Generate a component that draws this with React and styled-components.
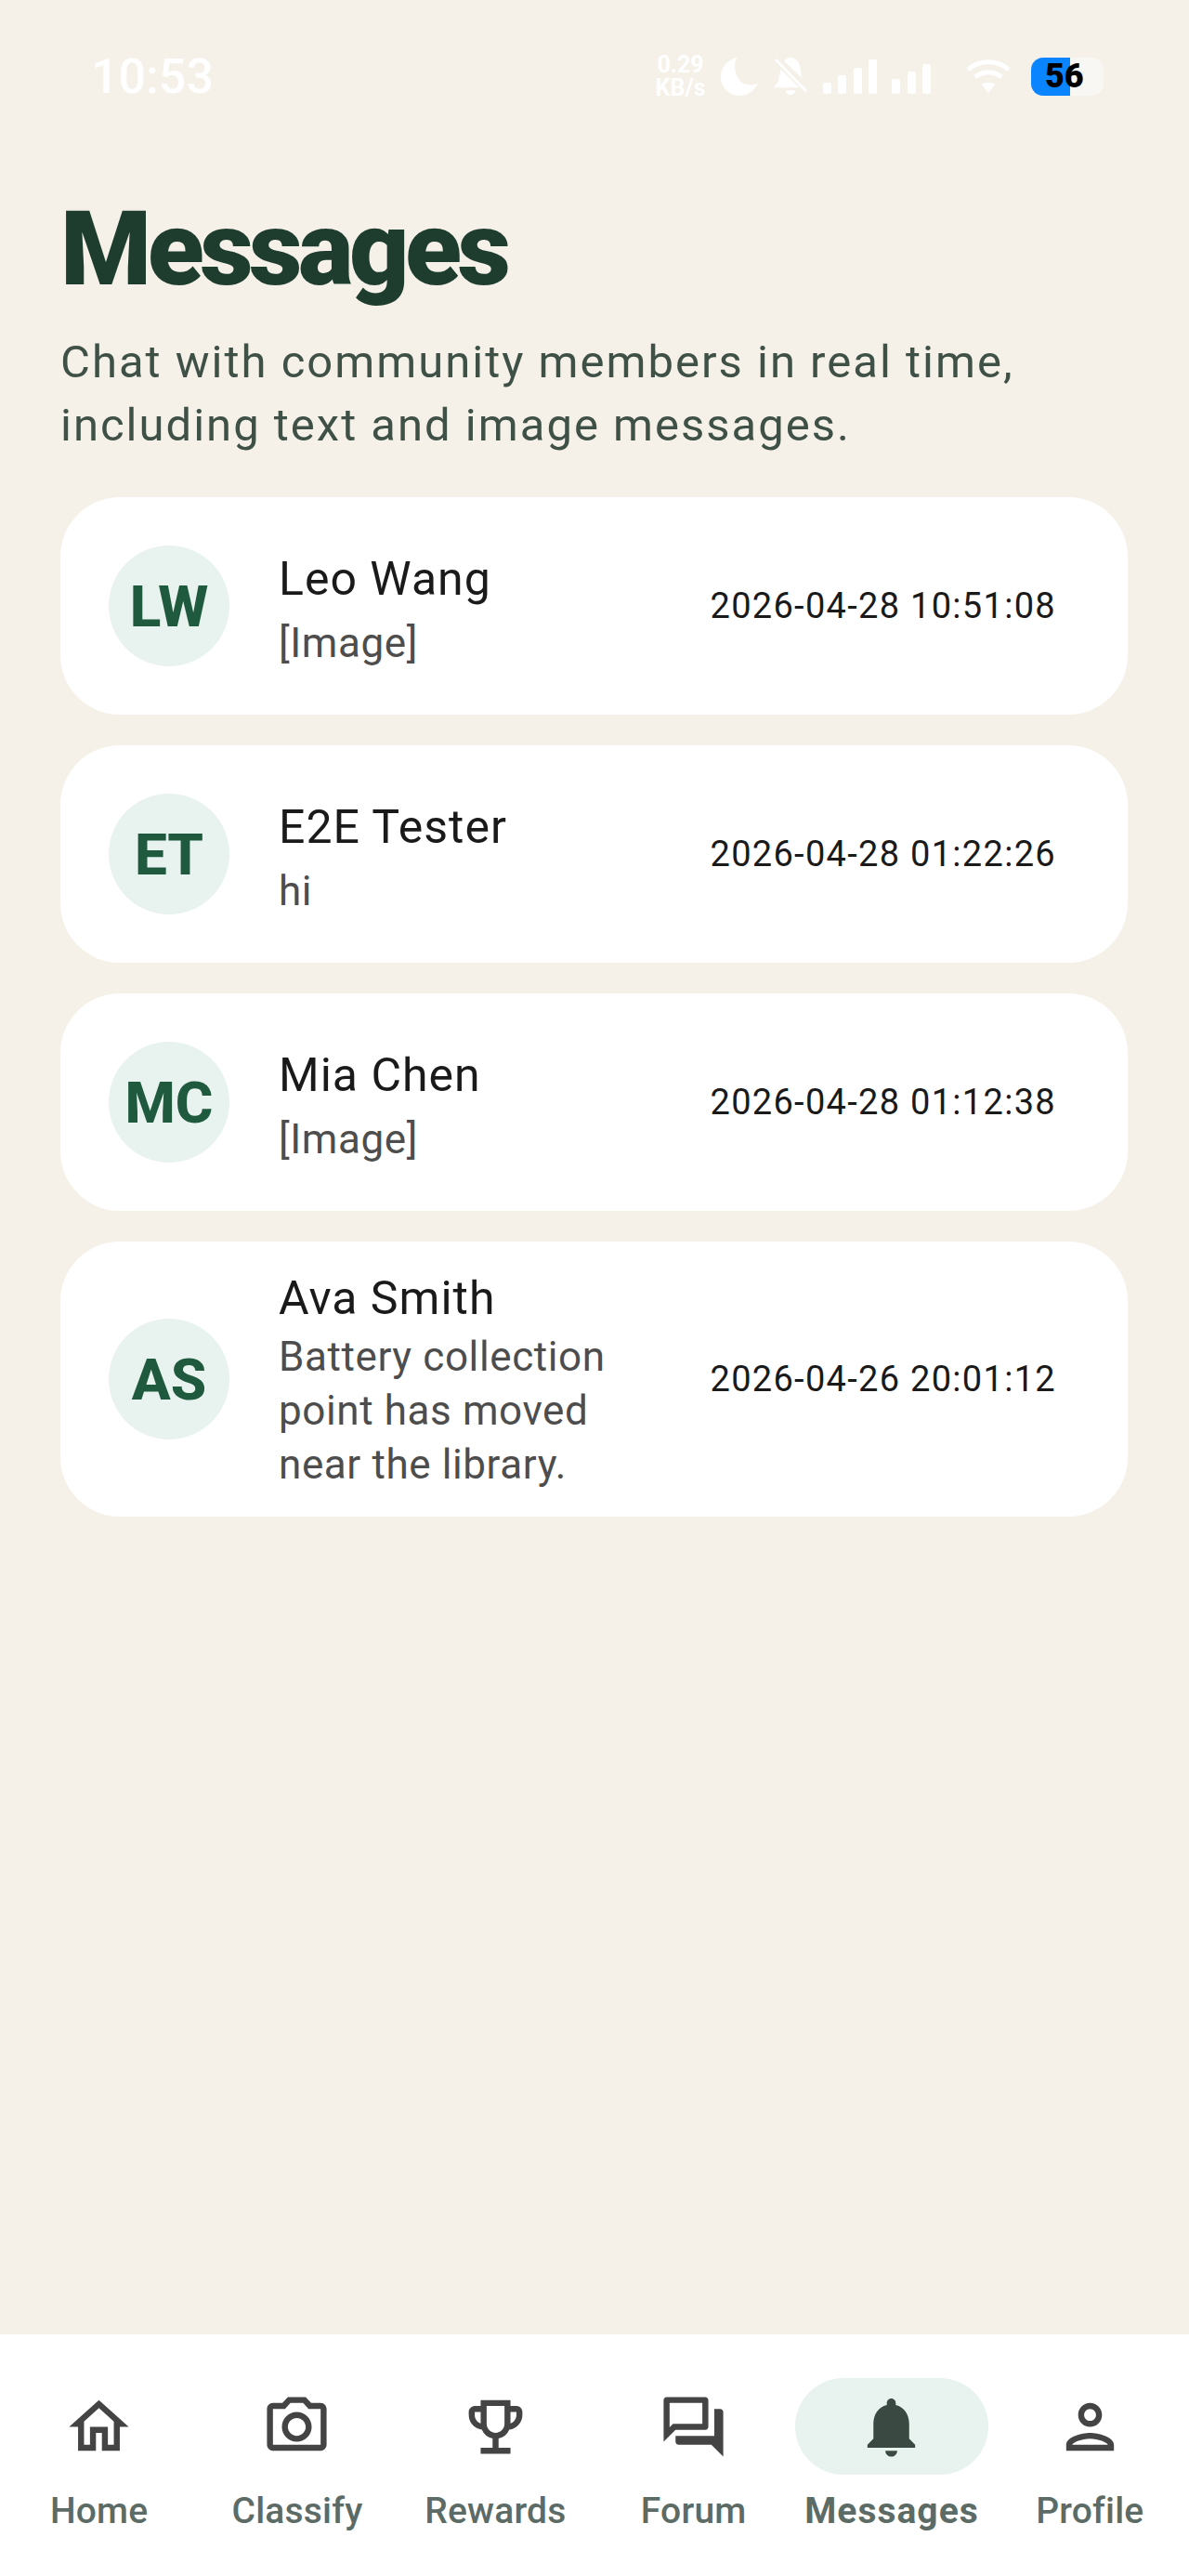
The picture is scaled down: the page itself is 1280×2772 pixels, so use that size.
import React from "react";
import styled, { createGlobalStyle } from "styled-components";
import {
  MdOutlineHome,
  MdOutlinePhotoCamera,
  MdOutlineEmojiEvents,
  MdOutlineForum,
  MdNotifications,
  MdOutlinePerson,
} from "react-icons/md";

const GlobalStyle = createGlobalStyle`
  html, body {
    margin: 0;
    padding: 0;
    background: #f5f1e9;
    font-family: Roboto, "Liberation Sans", sans-serif;
  }
`;

const threads = [
  { initials: "LW", name: "Leo Wang", preview: "[Image]", time: "2026-04-28 10:51:08" },
  { initials: "ET", name: "E2E Tester", preview: "hi", time: "2026-04-28 01:22:26" },
  { initials: "MC", name: "Mia Chen", preview: "[Image]", time: "2026-04-28 01:12:38" },
  {
    initials: "AS",
    name: "Ava Smith",
    preview: "Battery collection point has moved near the library.",
    time: "2026-04-26 20:01:12",
  },
];

const tabs = [
  { label: "Home", icon: MdOutlineHome },
  { label: "Classify", icon: MdOutlinePhotoCamera },
  { label: "Rewards", icon: MdOutlineEmojiEvents },
  { label: "Forum", icon: MdOutlineForum },
  { label: "Messages", icon: MdNotifications, active: true },
  { label: "Profile", icon: MdOutlinePerson },
];

const App = () => {
  return (
    <Page>
      <GlobalStyle />
      <StatusBar>
        <Clock>10:53</Clock>
        <StatusIcons>
          <NetSpeed>
            <span>0.29</span>
            <span>KB/s</span>
          </NetSpeed>
          <svg width="40" height="42" viewBox="0 0 40 42" fill="#fff">
            <path d="M17 1C6 4 0 12 0 22c0 11 9 20 20 20 9 0 16-5 20-14-3 2-7 3-11 2C18 29 12 14 17 1z" />
          </svg>
          <svg width="38" height="44" viewBox="0 0 40 44" fill="#fff">
            <path d="M20 1c6 0 10 5 11 11l2 12-20-19c2-3 4-4 7-4zM9 14l21 21H1l5-7 3-14zM14 38h12c-1 3-3 5-6 5s-5-2-6-5z" />
            <path d="M3 3l35 36" stroke="#fff" strokeWidth="3" fill="none" />
          </svg>
          <Signal bars={[12, 20, 28, 37]} />
          <Signal bars={[16, 24, 32]} />
          <WifiIcon width="48" height="38" viewBox="0 0 48 38" fill="none" stroke="#fff" strokeWidth="5">
            <path d="M2 12c12-11 32-11 44 0" />
            <path d="M10 20c8-7 20-7 28 0" />
            <path d="M24 37l-7-9c4-3 10-3 14 0z" fill="#fff" stroke="none" />
          </WifiIcon>
          <Battery>
            <BatteryLevel $level={54} />
            <BatteryText>56</BatteryText>
          </Battery>
        </StatusIcons>
      </StatusBar>

      <Main>
        <Title>Messages</Title>
        <Subtitle>
          Chat with community members in real time,
          <br />
          including text and image messages.
        </Subtitle>
        <ThreadList>
          {threads.map((thread) => {
            const long = thread.preview.length > 20;
            return (
              <ThreadCard key={thread.initials}>
                <Avatar>{thread.initials}</Avatar>
                <ThreadBody $long={long}>
                  <ThreadName>{thread.name}</ThreadName>
                  <ThreadPreview $long={long}>{thread.preview}</ThreadPreview>
                </ThreadBody>
                <ThreadTime>{thread.time}</ThreadTime>
              </ThreadCard>
            );
          })}
        </ThreadList>
      </Main>

      <TabBar>
        {tabs.map(({ label, icon: Icon, active }) => (
          <Tab key={label}>
            <TabIcon $active={active}>
              <Icon size={77} />
            </TabIcon>
            <TabLabel $active={active}>{label}</TabLabel>
          </Tab>
        ))}
      </TabBar>
    </Page>
  );
};

//little signal bars for the status bar
const Signal = ({ bars }) => (
  <SignalWrap>
    {bars.map((h, i) => (
      <SignalBar key={i} $height={h} />
    ))}
  </SignalWrap>
);

const Page = styled.div`
  display: flex;
  flex-direction: column;
  min-height: 2772px;
  background: #f5f1e9;
`;

const StatusBar = styled.div`
  display: flex;
  align-items: center;
  justify-content: space-between;
  height: 46px;
  padding: 59px 92px 0 98px;
`;

const Clock = styled.div`
  font-size: 52px;
  font-weight: 500;
  color: #fff;
`;

const StatusIcons = styled.div`
  display: flex;
  align-items: center;
  gap: 16px;
`;

const NetSpeed = styled.div`
  display: flex;
  flex-direction: column;
  align-items: center;
  font-size: 25px;
  line-height: 25px;
  font-weight: 700;
  color: #fff;
`;

const SignalWrap = styled.div`
  display: flex;
  align-items: flex-end;
  gap: 7.5px;
  height: 38px;
`;

const SignalBar = styled.div`
  width: 9px;
  height: ${(p) => p.$height}px;
  background: #fff;
  border-radius: 2px;
`;

const WifiIcon = styled.svg`
  margin: 0 6px 0 22px;
`;

const Battery = styled.div`
  position: relative;
  width: 78px;
  height: 41px;
  border-radius: 13px;
  overflow: hidden;
  background: rgba(255, 255, 255, 0.45);
`;

const BatteryLevel = styled.div`
  width: ${(p) => p.$level}%;
  height: 100%;
  background: #0a84ff;
`;

const BatteryText = styled.div`
  position: absolute;
  top: 0;
  left: 15px;
  font-size: 36px;
  line-height: 41px;
  font-weight: 900;
  color: #000;
`;

const Main = styled.main`
  flex: 1;
  padding: 0 66px 0 65px;
`;

const Title = styled.h1`
  margin: 100px 0 0;
  font-size: 112px;
  line-height: 126px;
  font-weight: 900;
  letter-spacing: -4.5px;
  color: #1f3d2e;
`;

const Subtitle = styled.p`
  margin: 25px 0 0;
  font-size: 49px;
  line-height: 68px;
  letter-spacing: 2px;
  color: #3f5146;
`;

const ThreadList = styled.div`
  display: flex;
  flex-direction: column;
  gap: 33px;
  margin-top: 43px;
`;

const ThreadCard = styled.div`
  display: flex;
  align-items: center;
  min-height: 234px;
  padding: 0 77px 0 52px;
  background: #fff;
  border-radius: 64px;
  box-sizing: border-box;
`;

const Avatar = styled.div`
  display: flex;
  align-items: center;
  justify-content: center;
  flex: none;
  width: 130px;
  height: 130px;
  margin-right: 53px;
  border-radius: 50%;
  background: #e8f2ee;
  font-size: 62px;
  font-weight: 800;
  color: #1f5a3f;
`;

const ThreadBody = styled.div`
  flex: 1;
  min-width: 0;
  padding: ${(p) => (p.$long ? 31 : 37)}px 60px 27px 0;
`;

const ThreadName = styled.div`
  font-size: 50px;
  line-height: 60px;
  letter-spacing: 1px;
  color: #1a1a1a;
`;

const ThreadPreview = styled.div`
  margin-top: ${(p) => (p.$long ? 4 : 10)}px;
  font-size: 44px;
  line-height: 58px;
  letter-spacing: 0.6px;
  color: #4d4d4d;
`;

const ThreadTime = styled.div`
  flex: none;
  font-size: 38px;
  letter-spacing: 1.3px;
  color: #1a1a1a;
`;

const TabBar = styled.nav`
  display: grid;
  grid-template-columns: repeat(6, 1fr);
  height: 260px;
  padding-top: 47px;
  background: #fff;
  box-sizing: border-box;
`;

const Tab = styled.div`
  display: flex;
  flex-direction: column;
  align-items: center;
`;

const TabIcon = styled.div`
  display: flex;
  align-items: center;
  justify-content: center;
  width: 208px;
  height: 104px;
  border-radius: 52px;
  background: ${(p) => (p.$active ? "#e8f2ee" : "transparent")};
  color: ${(p) => (p.$active ? "#3a4a43" : "#444")};
`;

const TabLabel = styled.div`
  margin-top: 14px;
  font-size: 39px;
  line-height: 50px;
  font-weight: ${(p) => (p.$active ? 700 : 500)};
  letter-spacing: ${(p) => (p.$active ? 1 : 0.2)}px;
  color: #5c6b66;
`;

export default App;
